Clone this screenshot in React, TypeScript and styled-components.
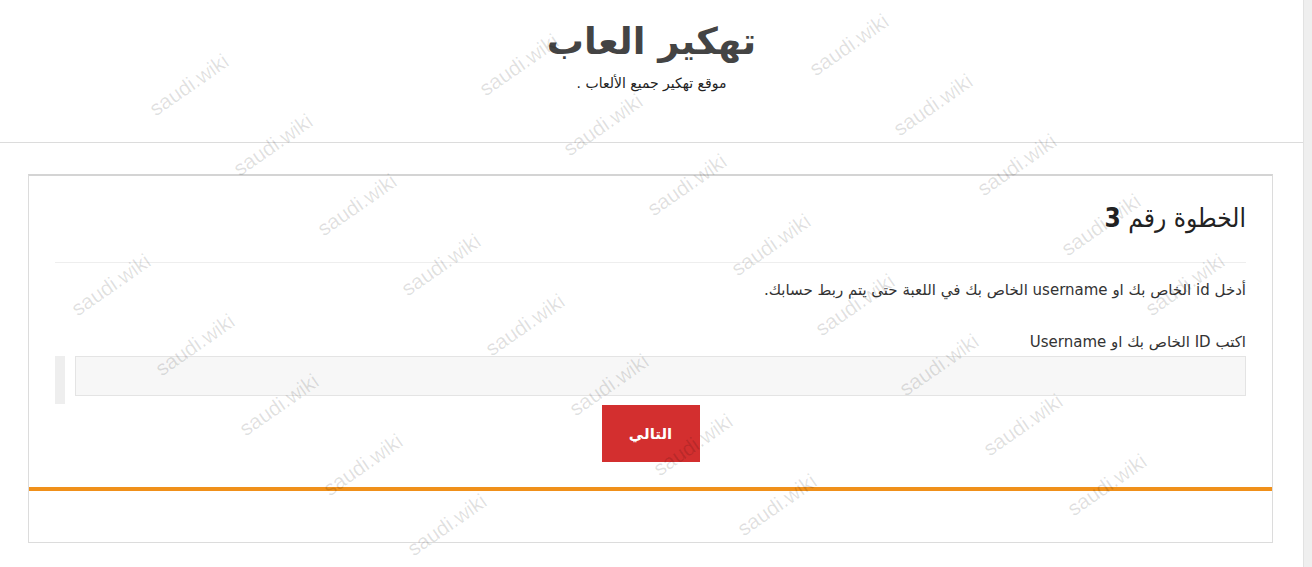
import React from "react";
import styled, { createGlobalStyle } from "styled-components";

const GlobalStyle = createGlobalStyle`
  html, body {
    margin: 0;
    padding: 0;
    background: #ffffff;
  }
  body {
    font-family: "DejaVu Sans", "Noto Sans", sans-serif;
    color: #333;
  }
`;

// watermark lattice (centres), worked out at render time
const marks: { x: number; y: number }[] = [];
for (let j = -3; j < 8; j++) {
  for (let i = -6; i < 14; i++) {
    const x = 105 + i * 84 + j * 330;
    const y = 25 + i * 60 - j * 20;
    if (x > 50 && x < 1262 && y > 38 && y < 528) marks.push({ x, y });
  }
}

export default function App() {
  return (
    <>
      <GlobalStyle />
      <Page>
        <Main>
          <Header>
            <SiteTitle>تهكير العاب</SiteTitle>
            <Tagline>موقع تهكير جميع الألعاب .</Tagline>
          </Header>

          <Content>
            <Card>
              <CardBody>
                <StepTitle>
                  الخطوة رقم <b>3</b>
                </StepTitle>
                <Divider />
                <Intro>
                  أدخل id الخاص بك او username الخاص بك في اللعبة حتى يتم ربط
                  حسابك.
                </Intro>
                <FieldLabel>اكتب ID الخاص بك او Username</FieldLabel>
                <InputRow>
                  <TextInput type="text" />
                  <Stub />
                </InputRow>
                <Actions>
                  <NextButton>التالي</NextButton>
                </Actions>
              </CardBody>
              <AccentBar />
              <CardFooter />
            </Card>
          </Content>
        </Main>
        <SideStrip />

        <Watermarks>
          {marks.map((m, k) => (
            <Mark key={k} style={{ left: m.x, top: m.y }}>
              saudi.wiki
            </Mark>
          ))}
        </Watermarks>
      </Page>
    </>
  );
}

const Page = styled.div`
  position: relative;
  display: flex;
  width: 1312px;
  height: 567px;
  overflow: hidden;
`;

const Main = styled.div`
  flex: 1;
  display: flex;
  flex-direction: column;
`;

const SideStrip = styled.div`
  width: 8px;
  background: #efefef;
  border-left: 1px solid #e2e2e2;
`;

const Header = styled.header`
  height: 143px;
  box-sizing: border-box;
  border-bottom: 1px solid #dcdcdc;
  display: flex;
  flex-direction: column;
  align-items: center;
  padding-top: 15px;
  direction: rtl;
`;

const SiteTitle = styled.h1`
  margin: 0;
  font-family: "DejaVu Sans", sans-serif;
  font-size: 37px;
  font-weight: bold;
  line-height: 54px;
  color: #444;
`;

const Tagline = styled.div`
  margin-top: 5px;
  font-family: "DejaVu Sans", sans-serif;
  font-size: 14px;
  line-height: 18px;
  color: #222;
`;

const Content = styled.main`
  padding: 31px 30px 0 28px;
`;

const Card = styled.section`
  border: 1px solid #dcdcdc;
  border-top: 2px solid #d4d4d4;
  height: 369px;
  box-sizing: border-box;
  display: flex;
  flex-direction: column;
  direction: rtl;
`;

const CardBody = styled.div`
  padding: 0 26px;
  display: flex;
  flex-direction: column;
`;

const StepTitle = styled.h2`
  margin: 22px 0 0;
  font-family: "DejaVu Sans Condensed", "DejaVu Sans", sans-serif;
  font-size: 26px;
  font-weight: normal;
  line-height: 40px;
  color: #222;

  b {
    font-weight: bold;
  }
`;

const Divider = styled.hr`
  margin: 24px 0 0;
  border: 0;
  border-top: 1px solid #eeeeee;
`;

const Intro = styled.p`
  margin: 16px 0 0;
  font-size: 15px;
  line-height: 22px;
  color: #333;
`;

const FieldLabel = styled.label`
  display: block;
  margin-top: 31px;
  font-size: 15px;
  line-height: 20px;
  color: #333;
`;

const InputRow = styled.div`
  display: flex;
  align-items: flex-start;
  gap: 10px;
  margin-top: 4px;
`;

const TextInput = styled.input`
  flex: 1;
  height: 40px;
  box-sizing: border-box;
  border: 1px solid #e4e4e4;
  background: #f7f7f7;
  outline: none;
`;

const Stub = styled.div`
  width: 10px;
  height: 48px;
  background: #eeeeee;
`;

const Actions = styled.div`
  display: flex;
  justify-content: center;
  margin-top: 1px;
`;

const NextButton = styled.button`
  width: 98px;
  height: 57px;
  border: 0;
  background: #d32f2f;
  color: #fff;
  font-family: "DejaVu Sans", sans-serif;
  font-size: 15px;
  font-weight: bold;
  cursor: pointer;
`;

const AccentBar = styled.div`
  margin-top: 25px;
  height: 4px;
  background: #f0901a;
`;

const CardFooter = styled.div`
  flex: 1;
`;

const Watermarks = styled.div`
  position: absolute;
  inset: 0;
  pointer-events: none;
  z-index: 5;
`;

const Mark = styled.span`
  position: absolute;
  font-family: "Liberation Sans", Arial, sans-serif;
  font-size: 21px;
  line-height: 24px;
  color: rgba(0, 0, 0, 0.12);
  transform: translate(-50%, -50%) rotate(-35deg);
  white-space: nowrap;
`;
